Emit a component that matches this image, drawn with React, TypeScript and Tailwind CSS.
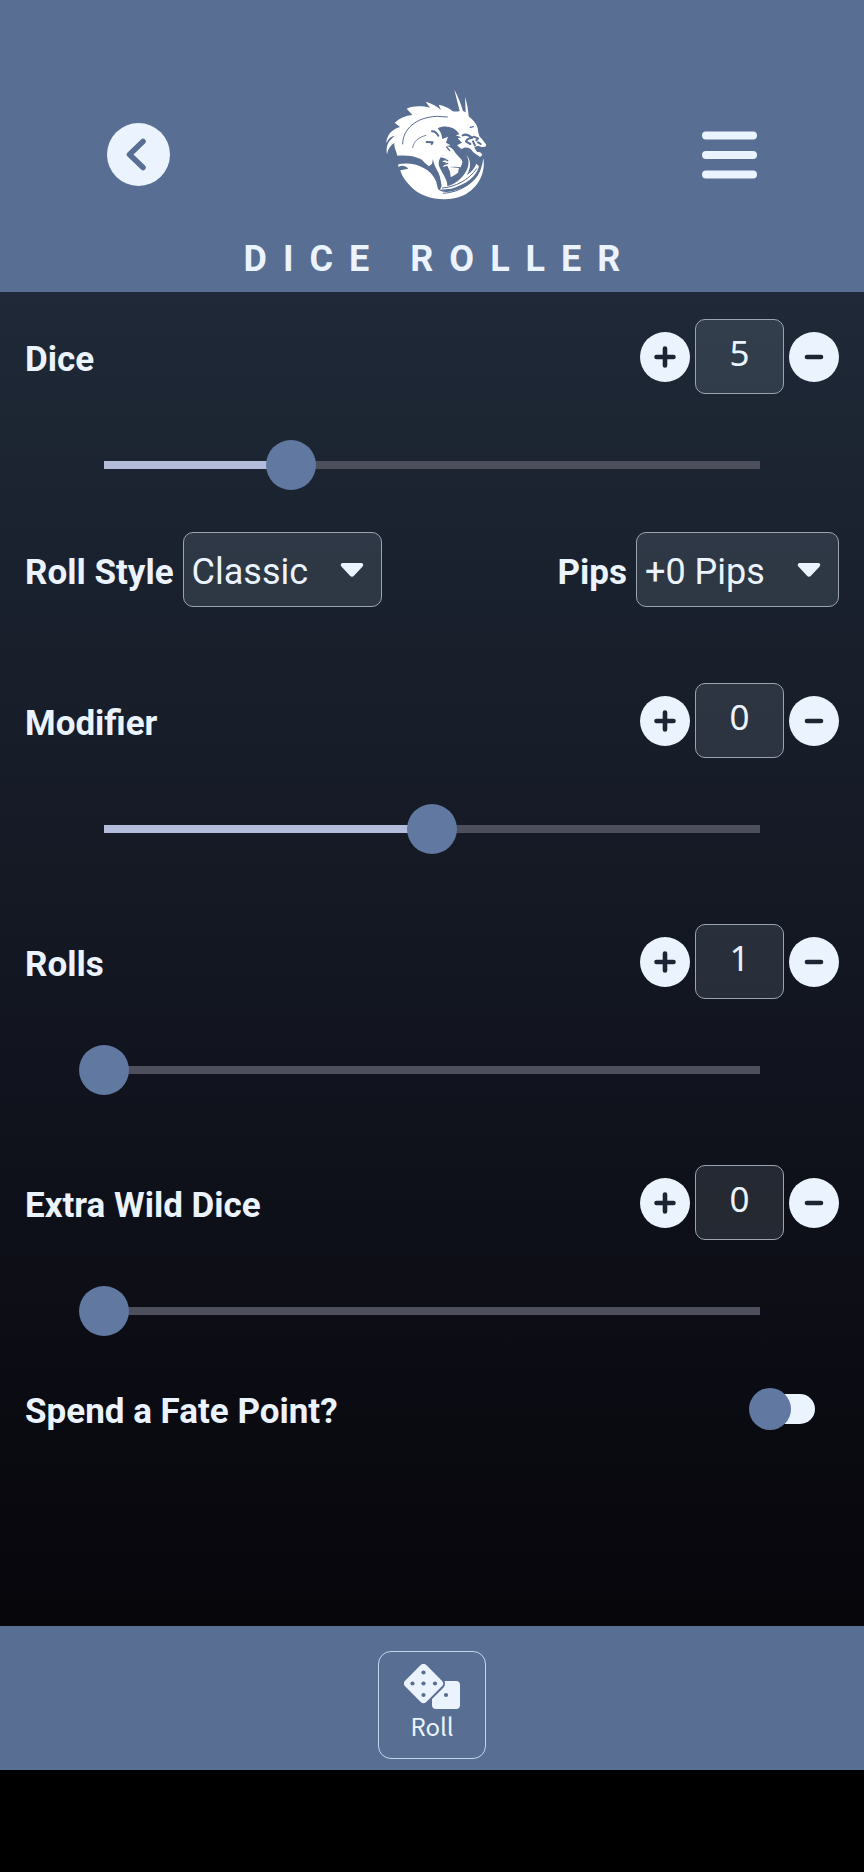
import { useState } from "react";

type CounterProps = {
  id: string;
  label: string;
  min: number;
  max: number;
  initial: number;
};

function StepIcon({ plus }: { plus?: boolean }) {
  return (
    <svg viewBox="0 0 50 50" className="size-full" aria-hidden="true">
      <path
        d={plus ? "M16.5 25h17M25 16.5v17" : "M18 25h14"}
        stroke="#1d2433"
        strokeWidth="4.6"
        strokeLinecap="round"
      />
    </svg>
  );
}

function Slider({ id, label, min, max, value, onChange }: {
  id: string;
  label: string;
  min: number;
  max: number;
  value: number;
  onChange: (value: number) => void;
}) {
  const percent = ((value - min) / (max - min)) * 100;
  return (
    <div className="relative mx-[54px] mt-11 flex h-[54px] items-center px-[25px]">
      <div className="h-2 w-full bg-[#4d4f5d]">
        <div className="h-full bg-[#b3bddb]" style={{ width: `${percent}%` }} />
      </div>
      <input
        id={id}
        aria-label={label}
        type="range"
        min={min}
        max={max}
        value={value}
        onChange={(e) => onChange(Number(e.target.value))}
        className="absolute inset-x-0 h-[54px] w-full cursor-pointer appearance-none bg-transparent outline-none [&::-webkit-slider-thumb]:size-[50px] [&::-webkit-slider-thumb]:appearance-none [&::-webkit-slider-thumb]:rounded-full [&::-webkit-slider-thumb]:bg-[#6178a1]"
      />
    </div>
  );
}

function Counter({ id, label, min, max, initial }: CounterProps) {
  const [value, setValue] = useState(initial);
  const clamp = (n: number) => Math.min(max, Math.max(min, n));
  return (
    <section>
      <div className="flex items-center justify-between">
        <label htmlFor={id} className="pt-1.5 font-bold">
          {label}
        </label>
        <div className="flex items-center gap-[5px]">
          <button
            type="button"
            aria-label={`Increase ${label}`}
            onClick={() => setValue(clamp(value + 1))}
            className="size-[50px] rounded-full bg-[#ebf3fe]"
          >
            <StepIcon plus />
          </button>
          <input
            id={id}
            inputMode="numeric"
            value={value}
            onChange={(e) => setValue(clamp(Number(e.target.value) || 0))}
            className="h-[75px] w-[89px] rounded-[10px] border border-[#9ba3b1] bg-[#c8dcf0]/12 pb-2 text-center font-['Noto_Sans',sans-serif] text-[35px] outline-none"
          />
          <button
            type="button"
            aria-label={`Decrease ${label}`}
            onClick={() => setValue(clamp(value - 1))}
            className="size-[50px] rounded-full bg-[#ebf3fe]"
          >
            <StepIcon />
          </button>
        </div>
      </div>
      <Slider
        id={`${id}-slider`}
        label={`${label} slider`}
        min={min}
        max={max}
        value={value}
        onChange={setValue}
      />
    </section>
  );
}

function Picker({ id, label, options, width }: {
  id: string;
  label: string;
  options: string[];
  width: string;
}) {
  return (
    <div className="flex items-center gap-[9px]">
      <label htmlFor={id} className="pt-1.5 font-bold">
        {label}
      </label>
      <div className="relative flex items-center">
        <select
          id={id}
          className={`h-[75px] appearance-none rounded-[10px] border border-[#9ba3b1] bg-[#c8dcf0]/12 pt-1 pl-2 text-4xl outline-none ${width}`}
        >
          {options.map((option) => (
            <option key={option} className="bg-[#2b3342]">
              {option}
            </option>
          ))}
        </select>
        <svg
          viewBox="0 0 24 16"
          className="pointer-events-none absolute right-[18px] h-4 w-6"
          aria-hidden="true"
        >
          <path
            d="M3 1h18c2 0 3 2 1.600 3.400l-8.600 9.400c-1.100 1.200-2.900 1.200-4 0L1.400 4.400C0 3 1 1 3 1z"
            fill="#ebf3fe"
          />
        </svg>
      </div>
    </div>
  );
}

function DragonLogo() {
  return (
    <svg viewBox="0 0 450 420" className="h-[140px] w-[150px]" role="img" aria-label="Dragon">
      <g fill="#ffffff">
        <path d="M112 242C108 226 102 218 103 204C92 210 84 222 81 238C76 214 86 196 104 184C96 182 86 188 79 205C80 180 94 164 120 156L104 143C120 129 137 122 157 120L140 101C160 92 184 92 210 98L197 80C215 85 232 94 243 105L236 89C252 92 268 99 278 109C286 110 294 110 299 108L283 44C294 64 302 84 309 108L317 112L315 66C321 84 325 105 326 124C337 133 349 144 353 160C355 172 356 184 364 190L379 209L376 215L364 216C356 211 348 213 343 218L352 232C358 229 364 233 367 240L360 246C350 237 342 236 334 224C326 216 314 215 304 222L291 211L306 203L293 190L304 187L287 181L298 178C290 164 278 156 261 155C250 154 240 156 233 160C240 168 246 178 247 192L264 185L258 203L272 211L258 213C272 215 280 222 287 235L306 256C309 264 304 270 302 277L285 275L268 276L297 279L294 293C285 300 278 304 272 306L270 290L262 272L248 276L258 262L246 260L260 252L242 247L252 236C240 246 234 257 237 272C246 296 262 310 262 333C280 331 306 313 320 286C330 266 326 248 316 238C334 252 334 278 321 300C335 291 345 277 349 266L357 274C350 303 320 328 275 341L240 344L245 332L240 306C235 286 222 276 219 252L216 266L207 274C196 266 190 258 182 252C160 241 138 240 112 242Z" />
        <path d="M115 268C157 259 210 276 228 318L234 342C244 354 268 353 289 345C337 333 364 301 370 250C378 296 352 341 311 361C264 382 190 376 151 333C134 316 125 301 121 286L145 281C135 272 127 270 115 276Z" />
      </g>
      <g fill="none" stroke="#596e93" strokeLinecap="round" strokeLinejoin="round">
        <path strokeWidth="3" d="M128 207C128 162 168 127 230 124L262 126" />
        <path strokeWidth="2.500" d="M158 218C162 198 174 188 198 181" />
        <path strokeWidth="6" d="M216 169C224 168 230 174 235 182M200 201L218 202L215 207" />
        <path strokeWidth="4" d="M260 216L269 227M246 250L263 257M247 270L263 265M331 157L340 155" />
        <path strokeWidth="6" d="M308 181C318 176 328 181 336 189C325 190 319 194 318 200L331 207M340 185L354 190L349 196M339 199L345 211M354 202L362 207" />
        <path strokeWidth="3" d="M247 339C286 336 325 316 350 281M250 355C300 352 342 325 359 287" />
      </g>
    </svg>
  );
}

function DiceIcon() {
  return (
    <svg viewBox="0 0 56 46" className="h-[46px] w-14" aria-hidden="true">
      <rect x="28" y="17" width="28" height="28" rx="4" fill="#ebf3fe" />
      <rect
        x="4.500" y="4.500" width="30" height="30" rx="4"
        transform="rotate(45 19.500 19.500)"
        fill="#ebf3fe" stroke="#596e93" strokeWidth="4" paintOrder="stroke"
      />
      <g fill="#596e93">
        <circle cx="19.500" cy="8.500" r="2.100" />
        <circle cx="8.500" cy="19.500" r="2.100" />
        <circle cx="19.500" cy="19.500" r="2.100" />
        <circle cx="31" cy="19.500" r="2.100" />
        <circle cx="19.500" cy="31" r="2.100" />
        <circle cx="42" cy="31" r="2.100" />
      </g>
    </svg>
  );
}

export default function App() {
  return (
    <div className="flex min-h-screen flex-col bg-black font-['Roboto',sans-serif] text-[35px] leading-10 text-[#ebf3fe]">
      <header className="bg-[#596e93] pt-[75px]">
        <div className="grid grid-cols-3 items-start px-[107px]">
          <button
            type="button"
            aria-label="Back"
            className="mt-12 size-[63px] justify-self-start rounded-full bg-[#ebf3fe]"
          >
            <svg viewBox="0 0 63 63" className="size-full" aria-hidden="true">
              <path d="M36 18.500L22.500 31.500L36 44.500" fill="none" stroke="#596e93" strokeWidth="5.500" strokeLinecap="round" strokeLinejoin="round" />
            </svg>
          </button>
          <div className="justify-self-center pl-1.5">
            <DragonLogo />
          </div>
          <button type="button" aria-label="Menu" className="mt-14 justify-self-end">
            <svg viewBox="0 0 55 48" className="block h-12 w-[55px]" aria-hidden="true">
              <path d="M4 4.500h47M4 24h47M4 43.500h47" stroke="#ebf3fe" strokeWidth="8" strokeLinecap="round" />
            </svg>
          </button>
        </div>
        <h1 className="pt-6 pb-[13px] pl-4 text-center text-4xl font-bold tracking-[16px]">DICE ROLLER</h1>
      </header>

      <main className="flex grow flex-col bg-linear-to-b from-[#1f2937] via-[#131722] to-[#07060b] px-[25px] pt-[27px]">
        <Counter id="dice" label="Dice" min={1} max={15} initial={5} />
        <div className="mt-10 mb-[76px] flex items-center justify-between">
          <Picker id="style" label="Roll Style" options={["Classic", "Wild Die"]} width="w-[199px]" />
          <Picker id="pips" label="Pips" options={["+0 Pips", "+1 Pips", "+2 Pips"]} width="w-[203px]" />
        </div>
        <div className="flex flex-col gap-[68px]">
          <Counter id="modifier" label="Modifier" min={-20} max={20} initial={0} />
          <Counter id="rolls" label="Rolls" min={1} max={20} initial={1} />
          <Counter id="wild" label="Extra Wild Dice" min={0} max={10} initial={0} />
        </div>
        <div className="mt-12 flex items-center justify-between pr-6">
          <label htmlFor="fate" className="pt-1.5 font-bold">Spend a Fate Point?</label>
          <span className="relative flex h-[42px] w-[66px] items-center">
            <input
              id="fate"
              type="checkbox"
              role="switch"
              className="peer ml-1 h-[30px] w-[62px] cursor-pointer appearance-none rounded-full bg-[#ebf3fe]"
            />
            <span className="pointer-events-none absolute left-0 size-[42px] rounded-full bg-[#6178a1] peer-checked:left-6" />
          </span>
        </div>
      </main>

      <footer className="flex justify-center bg-[#596e93] pt-[25px] pb-[11px]">
        <button
          type="button"
          className="flex size-[108px] flex-col items-center rounded-[13px] border border-[#c3d5ee] pt-3 font-['Noto_Sans_CJK_SC','Noto_Sans',sans-serif] text-2xl"
        >
          <DiceIcon />
          Roll
        </button>
      </footer>
      <div className="h-[102px] bg-black" />
    </div>
  );
}
